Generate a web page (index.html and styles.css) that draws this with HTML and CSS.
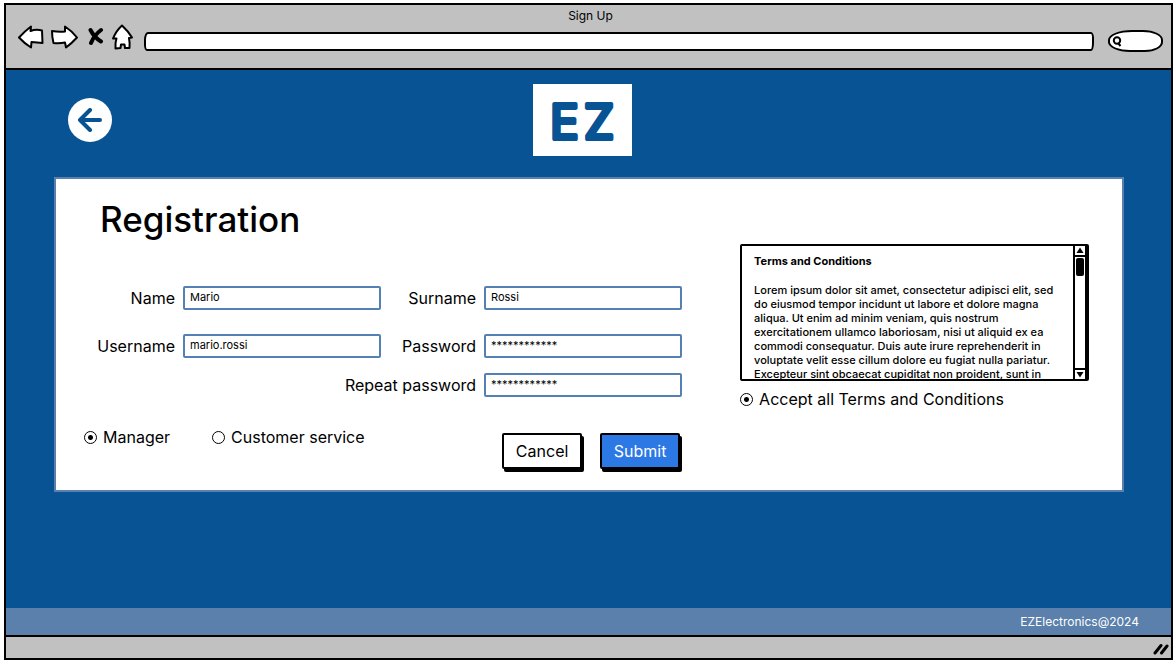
FILE: index.html
```
<!DOCTYPE html>
<html lang="en">
<head>
<meta charset="utf-8">
<meta name="viewport" content="width=device-width, initial-scale=1">
<title>Sign Up</title>
<link rel="stylesheet" href="styles.css">
</head>
<body>
<div class="window">
  <div class="toolbar">
    <div class="window-title">Sign Up</div>
    <div class="tools">
      <button class="tool" type="button" aria-label="Back"><svg width="26" height="24" viewBox="0 0 26 24"><path d="M1 12.500Q7 6 13 1.500L12.500 6Q18 4 24 5.500L24.500 18 13.500 17 13 22.500Q7 19 1 12.500Z"/></svg></button>
      <button class="tool tool-forward" type="button" aria-label="Forward"><svg width="28" height="24" viewBox="0 0 28 24"><path d="M1 6Q7 7 14 6.500L14 1.500Q21 6 26 12.500 21 18 15 22.500L14 17.500Q9 18.500 2.500 18 1 12 1 6Z"/></svg></button>
      <button class="tool tool-stop" type="button" aria-label="Stop"><svg width="16" height="20" viewBox="0 0 16 20"><path class="thick" d="M2.500 3C5 8 9 12 13 14.500M13 3C9 6 5 11 3 16"/></svg></button>
      <button class="tool tool-home" type="button" aria-label="Home"><svg width="22" height="26" viewBox="0 0 22 26"><path d="M10 1.500Q16 7 20 13.500L17 14Q18 19 17.500 24L13 24 12.500 20.500 9 20.500 8.500 24 3.500 24.500Q3 19 4.500 14.500L1 14.500Q4 7 10 1.500Z"/></svg></button>
      <input class="address" type="text" aria-label="Address">
      <label class="search">
        <svg width="10" height="12" viewBox="0 0 10 12"><circle cx="5" cy="4.500" r="3.200"/><path d="M6 7 8.500 10"/></svg>
        <input type="text" aria-label="Search">
      </label>
    </div>
  </div>

  <main class="page">
    <header class="header">
      <button class="back" type="button" aria-label="Go back"><svg width="26" height="24" viewBox="0 0 26 24"><path d="M23 12H3M13 2 3 12 13 22"/></svg></button>
      <div class="logo"><svg width="99" height="72" viewBox="0 0 99 72"><text x="17 51" y="55">EZ</text></svg></div>
    </header>

    <form class="panel">
      <h1>Registration</h1>
      <div class="columns">
        <div class="details">
          <div class="fields">
            <label for="name">Name</label>
            <input id="name" type="text" value="Mario">
            <label for="surname">Surname</label>
            <input id="surname" type="text" value="Rossi">
            <label for="username">Username</label>
            <input id="username" type="text" value="mario.rossi">
            <label for="password">Password</label>
            <input id="password" type="text" autocomplete="off" value="************">
          </div>
          <div class="fields repeat">
            <label class="wide" for="repeat">Repeat password</label>
            <input id="repeat" type="text" autocomplete="off" value="************">
          </div>
          <div class="actions">
            <div class="roles">
              <label class="choice"><input type="radio" name="role" checked>Manager</label>
              <label class="choice"><input type="radio" name="role">Customer service</label>
            </div>
            <div class="buttons">
              <button class="button" type="button">Cancel</button>
              <button class="button primary" type="submit">Submit</button>
            </div>
          </div>
        </div>
        <div class="terms">
          <div class="terms-box">
            <div class="terms-text">
              <h2>Terms and Conditions</h2>
              <p>Lorem ipsum dolor sit amet, consectetur adipisci elit, sed<br>do eiusmod tempor incidunt ut labore et dolore magna<br>aliqua. Ut enim ad minim veniam, quis nostrum<br>exercitationem ullamco laboriosam, nisi ut aliquid ex ea<br>commodi consequatur. Duis aute irure reprehenderit in<br>voluptate velit esse cillum dolore eu fugiat nulla pariatur.<br>Excepteur sint obcaecat cupiditat non proident, sunt in</p>
            </div>
            <div class="scrollbar">
              <svg class="arrow" width="10" height="9" viewBox="0 0 10 9"><path d="M5 1.500 8.500 7H1.500Z"/></svg>
              <div class="track"><div class="thumb"></div></div>
              <svg class="arrow" width="10" height="9" viewBox="0 0 10 9"><path d="M5 7.500 8.500 2H1.500Z"/></svg>
            </div>
          </div>
          <label class="choice"><input type="radio" name="accept" checked>Accept all Terms and Conditions</label>
        </div>
      </div>
    </form>
  </main>

  <footer class="footer">EZElectronics@2024</footer>
  <div class="status"><svg width="16" height="12" viewBox="0 0 16 12"><path d="M2 10 8 2.500M8.500 10 14 3"/></svg></div>
</div>
</body>
</html>
```

FILE: styles.css
```
* { box-sizing: border-box; }

body {
  margin: 0;
  min-height: 100vh;
  padding: 3px 0 6px 4px;
  display: flex;
  background: #fff;
  color: #000;
  font: 400 16px/20px Inter, "Noto Sans", sans-serif;
}

button, input { font: inherit; color: inherit; margin: 0; }
svg { display: block; }

.window {
  flex: 1;
  display: flex;
  flex-direction: column;
  border: 2px solid #000;
  background: #085394;
}

.toolbar {
  height: 65px;
  padding: 3px 8px 0 12px;
  background: #c1c1c1;
  border-bottom: 2px solid #000;
}
.window-title { text-align: center; font-size: 12px; line-height: 16px; }
.tools { display: flex; align-items: center; height: 26px; }
.tool { padding: 0; border: 0; background: none; }
.tool path { fill: #fff; stroke: #000; stroke-width: 2; stroke-linejoin: round; }
.tool .thick { fill: none; stroke-width: 4; stroke-linecap: round; }
.tool-forward { margin-left: 7px; }
.tool-stop { margin-left: 9px; }
.tool-home { margin-left: 8px; }
.address {
  flex: 1;
  min-width: 0;
  height: 19px;
  margin: 8px 14px 0 10px;
  border: 2px solid #000;
  border-radius: 4px 3px 3px 3px / 8px 6px 8px 6px;
  background: #fff;
}
.search {
  display: flex;
  width: 55px;
  height: 22px;
  margin-top: 8px;
  padding: 4px 2px;
  border: 2px solid #000;
  border-radius: 24px 20px 18px 22px / 10px;
  background: #fff;
}
.search svg { fill: none; stroke: #000; stroke-width: 2; flex: none; }
.search input { width: 100%; min-width: 0; height: 10px; padding: 0; border: 0; background: none; }

.page { flex: 1; padding: 14px 47px 24px 48px; }
.header {
  display: grid;
  grid-template-columns: 1fr auto 1fr;
  align-items: center;
  padding: 0 27px 0 14px;
}
.back {
  display: grid;
  place-items: center;
  width: 44px;
  height: 44px;
  padding: 0;
  border: 0;
  border-radius: 50%;
  background: #fff;
}
.back path { fill: none; stroke: #085394; stroke-width: 4; stroke-linecap: round; stroke-linejoin: round; }
.logo { background: #fff; }
.logo text {
  font: 400 48px Inter, sans-serif;
  fill: #085394;
  stroke: #085394;
  stroke-width: 4;
  stroke-linejoin: round;
}

.panel {
  margin-top: 21px;
  padding: 18px 33px 19px 28px;
  border: 2px solid #5a80b0;
  background: #fff;
}
h1 { margin: 0 0 3px 16px; font-size: 35px; line-height: 44px; font-weight: 500; }
.columns { display: grid; grid-template-columns: minmax(0, 12fr) minmax(0, 7fr); column-gap: 58px; }
.fields {
  display: grid;
  grid-template-columns: 91px 1fr 87px 1fr;
  gap: 24px 8px;
  align-items: center;
  padding-top: 42px;
  text-align: right;
}
.repeat { padding-top: 15px; }
.wide { grid-column: 2 / 4; }
.fields input {
  width: 100%;
  height: 24px;
  padding: 0 5px 2px;
  border: 2px solid #5580b4;
  border-radius: 2px;
  background: #fff;
  font-size: 11px;
}

.actions { display: flex; justify-content: space-between; padding-top: 30px; }
.roles { display: flex; gap: 42px; }
.choice { display: flex; align-items: center; align-self: flex-start; gap: 6px; white-space: nowrap; }
.choice input {
  appearance: none;
  width: 13px;
  height: 13px;
  flex: none;
  border: 1px solid #000;
  border-radius: 50%;
  background: #fff;
}
.choice input:checked { background: radial-gradient(circle, #000 0 2px, #fff 3px); }
.buttons { display: flex; gap: 16px; margin-top: 6px; }
.button {
  width: 80px;
  height: 36px;
  margin: 0 2px 2px 0;
  padding: 0;
  border: 2px solid #000;
  border-radius: 2px;
  background: #fff;
  box-shadow: 2px 3px #000;
}
.primary { background: #2c78e4; color: #fff; }

.terms-box {
  display: flex;
  height: 137px;
  border: 2px solid #000;
  border-right-width: 4px;
  border-radius: 2px;
}
.terms-text {
  flex: 1;
  min-width: 0;
  overflow: hidden;
  padding: 8px 0 0 12px;
  font-size: 11px;
  line-height: 14px;
  font-weight: 500;
  white-space: nowrap;
}
.terms-text h2 { margin: 0 0 15px; font-size: 11px; line-height: 14px; font-weight: 700; }
.terms-text p { margin: 0; }
.scrollbar { display: flex; flex-direction: column; width: 12px; border-left: 2px solid #000; }
.track { flex: 1; padding: 1px; border: solid #000; border-width: 2px 0; }
.thumb { height: 18px; background: #000; border-radius: 2px; }
.terms .choice { margin-top: 8px; }

.footer {
  padding: 4px 32px 3px;
  background: #5a80ab;
  color: #fff;
  text-align: right;
  font-size: 12px;
}
.status {
  display: flex;
  justify-content: flex-end;
  height: 23px;
  padding: 6px 2px 0;
  border-top: 2px solid #000;
  background: #c1c1c1;
}
.status path { fill: none; stroke: #000; stroke-width: 3; stroke-linecap: round; }
```
